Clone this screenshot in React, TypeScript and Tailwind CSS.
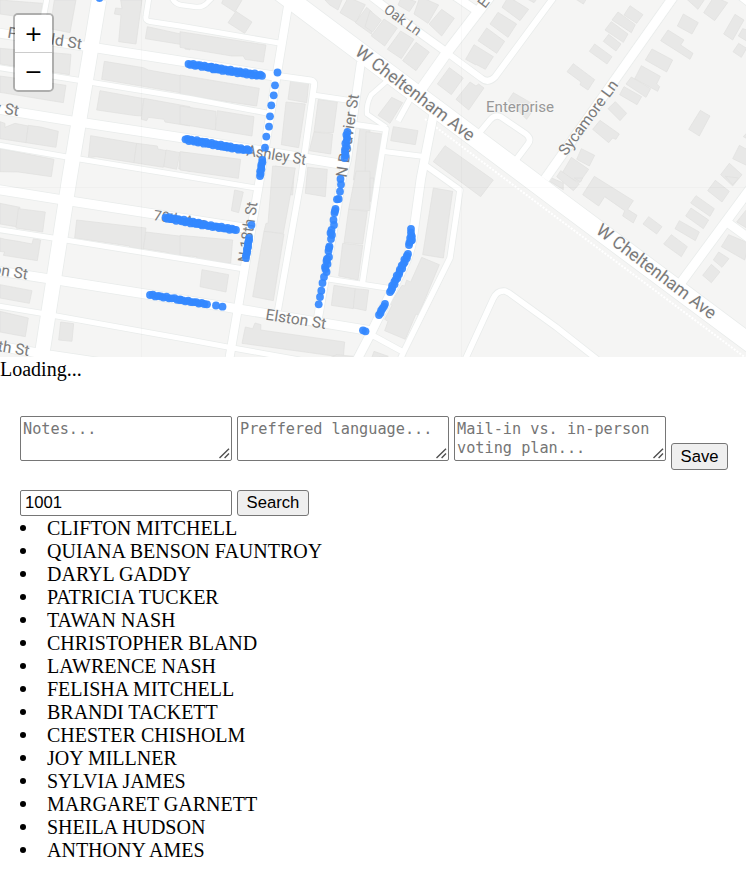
import React from "react";

type Pt = [number, number];

const roads: { d: string; w: number }[] = [
  { d: "M99 0L69.5 178L41.5 358", w: 14.5 },
  { d: "M-2 33L100 48.5L190 62.5L280 77", w: 9 },
  { d: "M275 75.5L311 80.5Q315 81 314 86L301 180L278 310", w: 6 },
  { d: "M-2 67.5L77 80L190 98.5L267 113", w: 5 },
  { d: "M-2 109L72 121L190 139L346 165", w: 9 },
  { d: "M-2 145L67 157L190 177L256 188", w: 5 },
  { d: "M-2 189.5L57 199L190 219.5L244 228", w: 9 },
  { d: "M-2 229.5L53 238L190 260L244 269", w: 5 },
  { d: "M-2 271L60 280.5L190 301L372 331", w: 9 },
  { d: "M-2 306L40 313L190 340L233 348L300 360", w: 5 },
  { d: "M-2 346L49 355L110 364", w: 9 },
  { d: "M288 6L278 67L260 178L229.5 358", w: 8 },
  { d: "M313 95L350 100.5", w: 5 },
  { d: "M361 62L347 160L342 178L317 324", w: 8 },
  { d: "M354 124.5L386 129L378 178L362 286", w: 5.5 },
  { d: "M388 80L371 95Q366 105 367 114L386 127", w: 4.5 },
  { d: "M328 279L390 288.5", w: 5 },
  { d: "M410 99L398 121", w: 5.5 },
  { d: "M434 112L421 178L413 236Q410 254 403 268L370 335L357 360", w: 8.5 },
  { d: "M384 151.5L424 156.5", w: 5 },
  { d: "M425 165L460 190L450 258L404 351L400 360", w: 5.5 },
  { d: "M370 334L405 353", w: 5.5 },
  { d: "M465 360L493 299Q497 290 505 291L509 293L556 327L598 360", w: 5.5 },
  { d: "M270 -15.6L387 72L556 198.5L770 358", w: 18 },
  { d: "M494 -9L448 51L417 95", w: 10 },
  { d: "M372 -3L402 20L445 51", w: 7.5 },
  { d: "M443 50L481 78Q488 84 495 77L554 -3", w: 6 },
  { d: "M452 -6L480 13", w: 8 },
  { d: "M480 132L490 120Q495 114 501 117L526 134Q532 139 528 144L516 160", w: 5.5 },
  { d: "M674 -4L545 179", w: 9 },
  { d: "M736 -6L750 5", w: 5 },
  { d: "M680 284L750 189", w: 9 },
  { d: "M724 220L750 239", w: 8.5 },
  { d: "M47 -2L40 36", w: 5 },
  { d: "M149 -3L146 16Q145 21 150 21.5L180 26L279 43", w: 5 },
  { d: "M171 -4Q174 4 181 5L196 7Q202 7.5 206 4L214 -4", w: 4.5 },
];

/* Building footprints, stored per survey sheet at triple scale. */
const sheets: { x: number; y: number; shapes: string[] }[] = [
  {
    x: 0, y: 0,
    shapes: [
      "0,0 128,10 120,50 90,55 0,42", "163,0 228,0 210,98 150,86", "362,0 426,0 408,132 356,125 363,45 343,42 347,24 366,26",
      "442,80 570,108 570,150 555,147 553,135 436,116", "313,184 430,203 445,210 570,232 570,283 305,238",
      "300,272 432,296 424,348 400,346 290,330", "432,295 570,320 570,378 495,366 492,358 445,352 440,362 424,358",
      "272,407 410,430 402,488 288,470 265,474", "410,430 472,438 474,447 500,452 490,502 402,488", "498,450 540,458 530,508 492,500", "542,456 570,460 570,514 536,506",
      "0,145 213,163 208,224 0,192", "0,228 198,256 190,308 0,277", "0,365 15,370 15,382 45,370 85,378 78,428 0,416", "85,376 122,381 175,394 168,442 78,428", "0,446 162,478 154,530 55,516 0,515",
    ],
  },
  {
    x: 180, y: 0,
    shapes: [
      "135,-15 192,-10 165,36 125,10", "168,34 216,66 194,100 144,68", "0,95 258,135 250,186 195,178 190,168 155,168 0,142",
      "0,225 238,265 230,318 0,284", "0,318 108,334 106,390 0,372", "112,332 222,350 216,408 106,390", "0,455 182,478 175,535 0,510",
      "332,240 386,248 380,308 324,298", "318,306 376,312 356,443 304,434", "415,298 472,306 460,398 402,396", "402,396 458,402 452,462 388,452", "285,498 343,508 338,585 276,578", "383,502 442,508 436,590 376,580", "540,385 570,390 570,540 520,540", "435,0 488,-5 474,30 448,14", "505,-8 556,14 528,67 480,38", "560,22 575,35 575,103 526,68",
    ],
  },
  {
    x: 370, y: 0,
    shapes: [
      "95,-10 138,5 118,35 84,15", "150,-10 206,15 174,70 132,42", "215,28 253,55 215,108 177,72", "0,32 34,60 8,96 -15,80", "42,57 82,84 44,138 4,108", "92,93 132,118 94,176 52,148", "138,127 178,156 138,212 98,182",
      "238,203 280,234 244,284 202,252", "300,246 318,258 326,252 342,264 296,330 258,298", "312,134 370,170 346,208 320,194 316,194 287,178", "350,84 404,124 380,160 324,122", "384,37 440,72 414,112 360,72", "415,-10 476,28 450,62 396,22", "480,-10 500,-2 492,8 470,-4",
      "430,278 482,308 464,314 488,332 470,358 414,302", "65,292 98,308 60,370 24,346", "70,380 144,392 136,434 62,422", "-12,395 36,402 16,540 -15,540", "225,437 370,540 332,590 190,485",
    ],
  },
  {
    x: 556, y: 0,
    shapes: [
      "60,-2 92,-4 82,12", "222,17 261,44 242,70 204,45", "186,36 238,74 226,98 168,60", "166,65 216,102 202,127 147,90", "158,103 195,132 180,153 142,124", "116,132 168,170 153,192 100,154", "52,191 116,239 96,270 72,254 75,246 33,215",
      "386,-8 450,-8 426,28", "474,-10 515,8 476,62 443,38", "382,42 427,68 408,102 364,78", "336,90 384,120 374,135 411,160 402,178 314,122", "288,147 350,180 332,216 268,180", "256,197 313,229 302,252 311,260 305,274 236,236", "226,231 284,266 270,292 210,252", "204,260 257,290 243,314 191,284", "178,305 212,340 192,362 156,326", "132,361 190,402 180,418 170,414 158,428 110,388", "76,446 116,466 100,498 62,478", "46,472 98,508 70,548 18,520", "14,512 70,552 52,572 2,530",
      "537,43 564,60 530,120 503,102", "560,86 580,92 580,128 547,108", "548,130 572,145 556,172 531,155", "433,331 462,348 430,408 398,388", "575,396 580,420 562,410", "550,436 580,452 580,500 530,476", "520,490 558,524 530,558 494,524",
    ],
  },
  {
    x: 0, y: 178,
    shapes: [
      "230,126 438,150 430,214 390,208 388,204 224,180", "438,162 570,178 570,238 508,230 506,224 430,212", "0,76 60,88 48,146 0,138", "55,92 136,102 128,162 48,150", "0,180 16,184 55,190 96,198 100,182 122,186 112,248 10,232 14,222 0,220", "0,320 96,338 88,376 0,360", "0,400 85,420 76,476 0,462", "182,432 221,437 216,490 176,486",
    ],
  },
  {
    x: 180, y: 178,
    shapes: [
      "0,172 158,186 152,256 50,244 50,236 0,232", "66,275 146,290 138,342 60,326", "164,36 190,42 176,104 154,98", "278,-36 346,-30 310,166 252,160 258,136 264,136", "252,160 312,168 280,368 218,356", "528,-20 570,-20 570,98 506,94", "506,94 562,100 548,198 492,194", "488,196 548,202 534,306 476,294", "462,322 526,332 520,392 454,382", "526,332 566,336 558,398 520,390", "196,447 218,452 225,435 243,440 242,456 494,492 490,538 186,496", "470,530 570,540 450,540",
    ],
  },
  {
    x: 370, y: 178,
    shapes: [
      "190,30 248,40 220,240 158,230", "155,238 208,260 145,412 138,408 106,484 44,458 54,430 44,424 66,382 60,378 96,322 104,324 110,306 122,312", "12,520 55,535 5,540", "545,0 580,15 580,35 536,8", "0,0 12,0 5,70 0,70",
    ],
  },
  {
    x: 556, y: 178,
    shapes: [
      "55,0 80,0 74,12", "115,-5 232,68 215,94 243,112 232,135 200,114 206,98 146,56 128,84 80,50", "278,116 318,146 302,168 261,138", "508,-5 548,0 530,20", "478,7 520,40 498,72 455,38", "420,53 475,92 462,115 404,75", "405,90 458,126 442,152 389,114", "370,128 430,162 418,188 357,152", "346,170 394,206 376,236 323,198", "518,170 580,196 566,246 496,206", "488,222 519,242 498,268 472,246", "466,259 492,282 466,314 440,292", "572,94 580,155 542,132",
    ],
  },
];

/* Runs of overlapping markers: from, to, count, sideways spread. */
const runs: [Pt, Pt, number, number][] = [
  [[188.5, 64], [218, 68.5], 14, 0.9], [[208, 67.5], [262, 75.8], 30, 1.2],
  [[262.3, 160], [260, 176], 8, 0.5],
  [[185.5, 139.3], [228, 147], 24, 1.1], [[224, 146.5], [249, 150.3], 13, 1],
  [[347.5, 132], [344.5, 158], 10, 0.9],
  [[165.5, 217.5], [200, 224], 20, 1.2], [[196, 223.5], [236, 230], 20, 0.9],
  [[249, 238], [246, 258], 10, 0.5],
  [[150, 295], [180, 299.5], 12, 0.7], [[180, 300], [207, 304.3], 11, 0.6],
  [[411, 229], [412, 240], 4, 0.5], [[411.5, 236], [409, 245], 5, 0.8],
  [[408, 254], [390, 292], 20, 0.9],
  [[385, 304], [379, 315], 6, 0.4],
];

const singles: Pt[] = [
  [99.5, -2], [277.5, 72.5], [275, 85.3], [273.7, 95.3], [271.3, 105.3], [270, 116.3], [269, 126.6], [266.3, 136.6], [265, 147.7],
  [340.5, 179], [341, 184.5], [340, 191.5], [338.7, 199], [337, 199.3], [335.5, 209], [334.5, 213], [335, 211], [333.5, 220], [334, 225], [331.5, 230], [332, 235], [331, 239], [329.5, 246.5], [328.5, 251], [329, 257], [326.5, 261], [327.5, 264], [325.5, 269], [326.5, 272], [324, 277], [322.5, 283], [321.3, 290.7], [320, 297], [318.7, 304.3],
  [330.5, 233], [329, 248], [327, 259], [325, 267],
  [251.5, 225], [216, 305.5], [222.5, 306.7], [363, 330.3], [365.5, 331.3],
];

const markers: Pt[] = [
  ...singles,
  ...runs.flatMap(([a, b, n, spread], r) => {
    const dx = b[0] - a[0];
    const dy = b[1] - a[1];
    const length = Math.hypot(dx, dy);
    return Array.from({ length: n }, (_, i): Pt => {
      const t = i / (n - 1);
      const side = i === 0 || i === n - 1 ? 0 : Math.sin(i * 2.4 + r) * spread;
      return [a[0] + dx * t - (dy / length) * side, a[1] + dy * t + (dx / length) * side];
    });
  }),
];

type LabelProps = { x: number; y: number; r: number; len?: number; size?: number; end?: boolean; fill?: string; children: string };

function Label({ x, y, r, len, size = 15.5, end, fill = "#7b7b7b", children }: LabelProps) {
  return (
    <text
      transform={`translate(${x} ${y}) rotate(${r})`}
      fontSize={size}
      textLength={len}
      lengthAdjust="spacingAndGlyphs"
      textAnchor={end ? "end" : "start"}
      fill={fill}
      stroke="#f8f8f7"
      strokeWidth="1.5"
      strokeOpacity="0.7"
      paintOrder="stroke"
    >
      {children}
    </text>
  );
}

function StreetMap() {
  return (
    <svg width="746" height="357" viewBox="0 0 746 357" className="block font-['Roboto',sans-serif]">
      <rect width="746" height="357" fill="#f5f5f4" />
      {sheets.map((s) => (
        <g key={`${s.x}-${s.y}`} transform={`translate(${s.x} ${s.y}) scale(0.33333)`}>
          {s.shapes.map((p) => (
            <polygon key={p} points={p} fill="#e8e8e7" stroke="#dfdfde" strokeWidth="2" />
          ))}
        </g>
      ))}
      <g fill="none" strokeLinejoin="round">
        {roads.map((r) => (
          <path key={r.d} d={r.d} stroke="#e9eceb" strokeWidth={r.w + 1.6} />
        ))}
        {roads.map((r) => (
          <path key={r.d} d={r.d} stroke="#ffffff" strokeWidth={r.w} />
        ))}
        <path d="M425 119L556 217L746 358" stroke="#ffffff" strokeWidth="2" strokeDasharray="2 1.5" />
        <path d="M141.5 0V357M461.5 0V357M0 187.5H746" stroke="#000000" strokeOpacity="0.02" />
      </g>
      <Label x={7} y={37.5} r={9} len={75}>Penfield St</Label>
      <Label x={18} y={116} r={9} end>y St</Label>
      <Label x={27} y={279.5} r={9} end>on St</Label>
      <Label x={28.5} y={356} r={9} end>th St</Label>
      <Label x={246} y={155.5} r={9} len={60}>Ashley St</Label>
      <Label x={265} y={319.5} r={9} len={61}>Elston St</Label>
      <Label x={153} y={220} r={9} len={54} size={14.5}>78th Ave</Label>
      <Label x={248.5} y={263} r={-81.5} len={61}>N 18th St</Label>
      <Label x={346.5} y={178} r={-81.5} len={84}>N Bouvier St</Label>
      <Label x={354} y={54} r={37.3} len={145} size={17.5}>W Cheltenham Ave</Label>
      <Label x={595} y={232.5} r={37} len={145} size={17.5}>W Cheltenham Ave</Label>
      <Label x={383} y={11.5} r={36} len={42} size={14}>Oak Ln</Label>
      <Label x={566} y={156.5} r={-53.5} len={89}>Sycamore Ln</Label>
      <Label x={485} y={9} r={-53} size={15}>E</Label>
      <Label x={486} y={111.5} r={0} len={68} size={14} fill="#989898">Enterprise</Label>
      <g fill="#3388ff" fillOpacity="0.92">
        {markers.map(([x, y], i) => (
          <circle key={i} cx={x} cy={y} r="3.9" />
        ))}
      </g>
    </svg>
  );
}

const names = [
  "CLIFTON MITCHELL", "QUIANA BENSON FAUNTROY", "DARYL GADDY", "PATRICIA TUCKER", "TAWAN NASH",
  "CHRISTOPHER BLAND", "LAWRENCE NASH", "FELISHA MITCHELL", "BRANDI TACKETT", "CHESTER CHISHOLM",
  "JOY MILLNER", "SYLVIA JAMES", "MARGARET GARNETT", "SHEILA HUDSON", "ANTHONY AMES",
];

function NoteArea({ placeholder }: { placeholder: string }) {
  return (
    <div className="relative h-[45px] w-[212px] shrink-0">
      <textarea
        className="block h-full w-full resize-none overflow-hidden rounded-[2px] border border-[#767676] bg-white px-[2px] pt-[3px] font-['DejaVu_Sans_Mono',monospace] text-[15.22px] leading-[19px] placeholder:text-[#757575]"
        placeholder={placeholder}
      />
      <svg className="absolute bottom-[2px] right-[2px]" width="11" height="11" viewBox="0 0 11 11" stroke="#4f4f4f" strokeWidth="1.4">
        <path d="M0.5 10L10 0.8M5.6 10L10 5.6" fill="none" strokeDasharray="none" />
      </svg>
    </div>
  );
}

const buttonClass =
  "shrink-0 rounded-[3px] border border-[#767676] bg-[#efefef] text-center font-['Liberation_Sans',sans-serif] text-[16.67px] text-black";
const zoomClass = "flex h-[37px] w-[37px] items-center justify-center bg-white font-['DejaVu_Sans',sans-serif] text-[22px] leading-none text-black";

export default function App() {
  return (
    <div className="h-[876px] w-[746px] overflow-hidden bg-white font-['Liberation_Serif',serif] text-[20px] leading-[23px] text-black">
      <div className="relative h-[357px] overflow-hidden">
        <StreetMap />
        <div className="absolute left-[13px] top-[13px] flex flex-col overflow-hidden rounded-[5px] border-2 border-black/25 bg-clip-padding">
          <button className={zoomClass}>+</button>
          <button className={`${zoomClass} box-content border-t border-[#cccccc]`}>−</button>
        </div>
      </div>
      <div className="h-[23px] pt-px">Loading...</div>
      <div className="mt-9 px-5">
        <div className="flex h-[74px] items-start gap-[5px]">
          <NoteArea placeholder="Notes..." />
          <NoteArea placeholder="Preffered language..." />
          <NoteArea placeholder="Mail-in vs. in-person voting plan..." />
          <button className={`${buttonClass} mt-[27px] h-[27px] w-[57px] pb-px leading-[23px]`}>Save</button>
        </div>
        <div className="flex h-[26px] gap-[5px]">
          <input
            className="h-[26px] w-[212px] rounded-[2px] border border-[#767676] bg-white px-1 font-['Liberation_Sans',sans-serif] text-[16.67px]"
            defaultValue="1001"
          />
          <button className={`${buttonClass} h-[26px] w-[72px] leading-[24px]`}>Search</button>
        </div>
        <ul>
          {names.map((name) => (
            <li key={name} className="flex h-[23px] items-center">
              <span className="mr-[21px] mt-px h-[6px] w-[6px] rounded-full bg-black" />
              <span className="pt-px leading-[22px]">{name}</span>
            </li>
          ))}
        </ul>
      </div>
    </div>
  );
}
